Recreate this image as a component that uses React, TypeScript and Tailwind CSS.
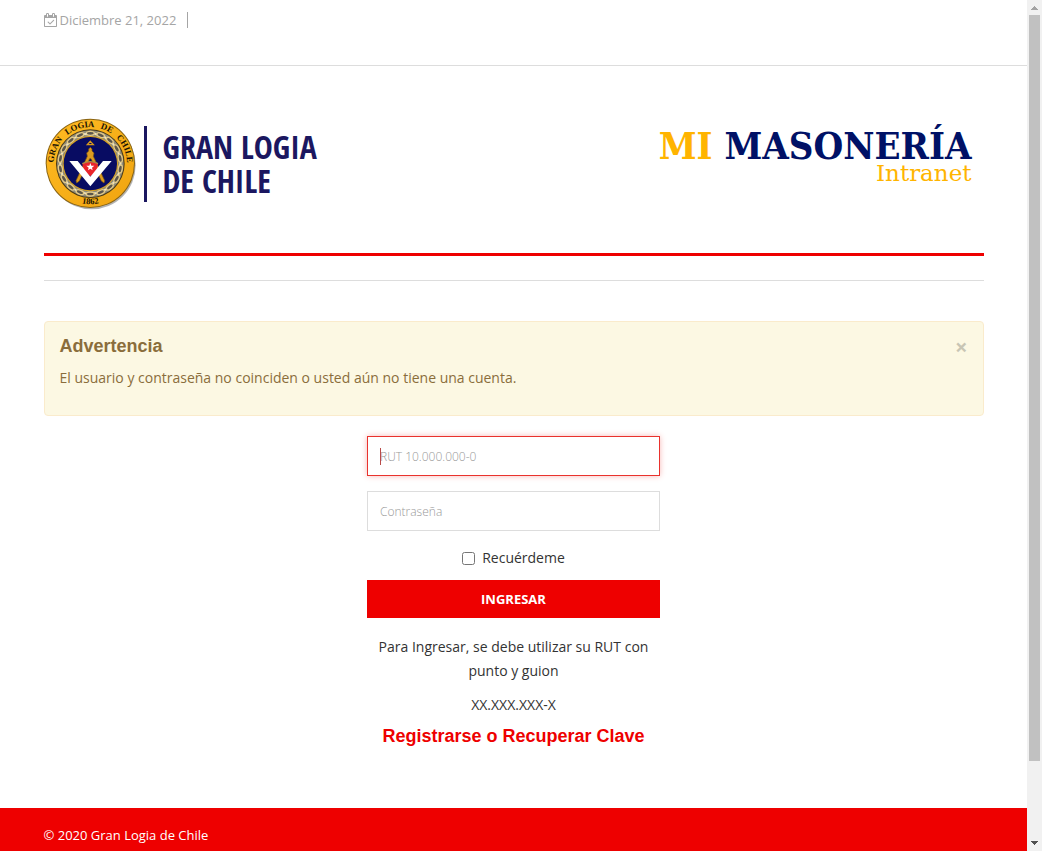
import React from "react";

const CHAIN_LINKS = Array.from({ length: 18 }, (_, i) => i * 20);

const MOTTO = [
  { word: "GRAN", at: "12%" },
  { word: "LOGIA", at: "41%" },
  { word: "DE", at: "64%" },
  { word: "CHILE", at: "87%" },
];

function CalendarCheckIcon() {
  return (
    <svg viewBox="0 0 1664 1792" className="h-[14px] w-[13px] fill-current" aria-hidden="true">
      <path d="M1303 964l-512 512q-10 9-23 9t-23-9l-288-288q-9-10-9-23t9-22l46-46q9-9 22-9t23 9l220 220 444-444q10-9 23-9t22 9l46 46q9 9 9 22t-9 23zm-1175 700h1408v-1024h-1408v1024zm384-1216v-288q0-14-9-23t-23-9h-64q-14 0-23 9t-9 23v288q0 14 9 23t23 9h64q14 0 23-9t9-23zm768 0v-288q0-14-9-23t-23-9h-64q-14 0-23 9t-9 23v288q0 14 9 23t23 9h64q14 0 23-9t9-23zm384-64v1280q0 52-38 90t-90 38h-1408q-52 0-90-38t-38-90v-1280q0-52 38-90t90-38h128v-96q0-66 47-113t113-47h64q66 0 113 47t47 113v96h384v-96q0-66 47-113t113-47h64q66 0 113 47t47 113v96h128q52 0 90 38t38 90z" />
    </svg>
  );
}

function Seal() {
  return (
    <svg viewBox="12 21 279 279" className="size-[93px] shrink-0" aria-hidden="true">
      <defs>
        <path id="motto" d="M 41 161 A 110 110 0 0 1 261 161" />
        <path id="year" d="M 91 267 A 122 122 0 0 0 211 267" />
        <linearGradient id="gold" x1="0" y1="0" x2="1" y2="1">
          <stop offset="0" stopColor="#ffbb22" />
          <stop offset="1" stopColor="#f0a410" />
        </linearGradient>
      </defs>
      <circle cx="155" cy="166" r="132" fill="#000" opacity="0.3" />
      <circle cx="151" cy="160" r="134" fill="#8a6412" />
      <circle cx="151" cy="160" r="131" fill="url(#gold)" />
      <circle cx="151" cy="161" r="103" fill="#4a3a14" />
      <circle cx="151" cy="161" r="100" fill="#8f8a78" />
      {CHAIN_LINKS.map((angle) => (
        <g key={angle} transform={`rotate(${angle} 151 161)`}>
          <ellipse cx="151" cy="70" rx="12" ry="6" fill="#5b564c" stroke="#e2c988" strokeWidth="4" />
          <path d="M164 71 L171 74" stroke="#efe4c0" strokeWidth="6" />
        </g>
      ))}
      <circle cx="151" cy="161" r="83" fill="#d9a321" />
      <circle cx="151" cy="161" r="80" fill="#080c62" />
      <path d="M151 94 L160 104 H142 Z" fill="none" stroke="#d99a1c" strokeWidth="4" />
      <path d="M151 112 L156 117 V123 L162 129 L160 139 L194 212 L192 219 L184 213 L153 146 H149 L118 213 L110 219 L108 212 L142 139 L140 129 L146 123 V117 Z" fill="#dc9c20" stroke="#7b5410" strokeWidth="2" />
      <path d="M127 160 Q151 150 174 160 L170 184 L151 199 L132 184 Z" fill="#e9252b" />
      <path d="M127 161 Q151 149 174 161" fill="none" stroke="#a98c4a" strokeWidth="4" />
      <path d="M151 159 L154 167 L163 167 L156 173 L158 181 L151 176 L144 181 L146 173 L139 167 L148 167 Z" fill="#fff" />
      <path d="M88 153 H113 L151 200 L189 153 H215 L151 229 Z" fill="#fff" />
      {MOTTO.map(({ word, at }) => (
        <text key={word} className="font-['Liberation_Serif',serif] text-[26px] font-bold" fill="#171204" textAnchor="middle">
          <textPath href="#motto" startOffset={at}>{word}</textPath>
        </text>
      ))}
      <text className="font-['Liberation_Serif',serif] text-[26px] font-bold" fill="#171204" textAnchor="middle">
        <textPath href="#year" startOffset="50%">1862</textPath>
      </text>
    </svg>
  );
}

function ScrollRail() {
  return (
    <div className="flex w-[15px] shrink-0 flex-col items-center bg-[#f1f1f1]" aria-hidden="true">
      <svg viewBox="0 0 15 15" className="h-[15px] w-[15px] shrink-0" shapeRendering="crispEdges">
        <path d="M7 6h1v1h1v1h1v1h1v1H4V9h1V8h1V7h1z" fill="#a3a3a3" />
      </svg>
      <div className="flex w-[11px] flex-1 flex-col">
        <div className="grow-[10] bg-[#c1c1c1]" />
        <div className="grow" />
      </div>
      <svg viewBox="0 0 15 15" className="h-[15px] w-[15px] shrink-0" shapeRendering="crispEdges">
        <path d="M4 5h7v1h-1v1H9v1H8v1H7V8H6V7H5V6H4z" fill="#505050" />
      </svg>
    </div>
  );
}

export default function App() {
  const [warning, setWarning] = React.useState(true);
  const field =
    "block h-10 w-full border bg-white px-3 text-xs font-light text-[#555] outline-none placeholder:text-[#999]";

  return (
    <div className="flex h-screen bg-white font-['Open_Sans',sans-serif] text-sm leading-6 text-[#333]">
      <div className="flex min-w-0 flex-1 flex-col overflow-y-auto [scrollbar-width:none]">
        <div className="h-[66px] shrink-0 border-b border-[#ddd]">
          <div className="mx-auto flex max-w-[940px] items-center pt-2 text-[13px] text-[#a5a5a5]">
            <CalendarCheckIcon />
            <time dateTime="2022-12-21" className="ml-[3px]">Diciembre 21, 2022</time>
            <span className="ml-[11px] h-4 border-l border-[#a5a5a5]" />
          </div>
        </div>

        <div className="mx-auto w-full max-w-[940px] flex-1">
          <header className="flex h-[190px] items-start justify-between border-b-[3px] border-[#ee0000] pt-[51px]">
            <a href="#inicio" className="flex items-center">
              <Seal />
              <span className="ml-[7px] h-[76px] w-[3px] bg-[#1b1760]" />
              <span className="ml-4 flex flex-col font-['Noto_Sans_ExtraCondensed','Open_Sans_Condensed','Roboto_Condensed',sans-serif] text-[32px] leading-[34px] font-bold text-[#1b1760]">
                <span>GRAN LOGIA</span>
                <span>DE CHILE</span>
              </span>
            </a>
            <a href="#intranet" className="mr-3 flex flex-col items-end whitespace-nowrap">
              <span className="pt-1.5 font-['DejaVu_Serif_Condensed','DejaVu_Serif',serif] text-[38px] leading-[46px] font-bold text-[#001166]">
                <span className="text-[#ffb400]">MI</span> MASONERÍA
              </span>
              <span className="-mt-1.5 font-['DejaVu_Serif',serif] text-[23px] leading-5 text-[#ffb400]">Intranet</span>
            </a>
          </header>
          <div className="h-[25px] border-b border-[#ddd]" />

          <main className="pt-10 pb-[60px]">
            {warning && (
              <section role="alert" className="flex h-[95px] items-start justify-between rounded border border-[#faebcc] bg-[#fcf8e3] px-[15px] pt-3 text-[#8a6d3b]">
                <div>
                  <h4 className="font-['Liberation_Sans',Arial,sans-serif] text-lg leading-6 font-bold">Advertencia</h4>
                  <p className="mt-2">El usuario y contraseña no coinciden o usted aún no tiene una cuenta.</p>
                </div>
                <button type="button" aria-label="Cerrar" onClick={() => setWarning(false)} className="text-[22px] leading-6 font-bold text-black opacity-20">
                  ×
                </button>
              </section>
            )}

            <form className="mx-auto mt-5 max-w-[293px] text-center" onSubmit={(e) => e.preventDefault()}>
              <div className="relative">
                <input aria-label="RUT" name="rut" placeholder="RUT 10.000.000-0" className={`${field} border-[#e9322d] caret-transparent shadow-[0_0_6px_#f8b9b7]`} />
                <span className="absolute top-3 left-[13px] h-[17px] w-px bg-[#b94a48]" />
              </div>
              <input aria-label="Contraseña" name="clave" type="password" placeholder="Contraseña" className={`${field} mt-[15px] border-[#ddd]`} />
              <label className="mt-[15px] flex items-center justify-center gap-[7px]">
                <input type="checkbox" className="size-[13px]" />
                Recuérdeme
              </label>
              <button type="submit" className="mt-2.5 h-[38px] w-full bg-[#ee0000] text-[13px] font-bold text-white">
                INGRESAR
              </button>
              <p className="mt-[17px]">Para Ingresar, se debe utilizar su RUT con punto y guion</p>
              <p className="mt-2.5">XX.XXX.XXX-X</p>
              <h4 className="mt-[7px] font-['Liberation_Sans',Arial,sans-serif] text-lg leading-6 font-bold text-[#ee0000]">
                <a href="#registro">Registrarse o Recuperar Clave</a>
              </h4>
            </form>
          </main>
        </div>

        <footer className="shrink-0 bg-[#ee0000] text-[13px] text-white">
          <div className="mx-auto max-w-[940px] pt-[15px] pb-1">© 2020 Gran Logia de Chile</div>
        </footer>
      </div>
      <ScrollRail />
    </div>
  );
}
